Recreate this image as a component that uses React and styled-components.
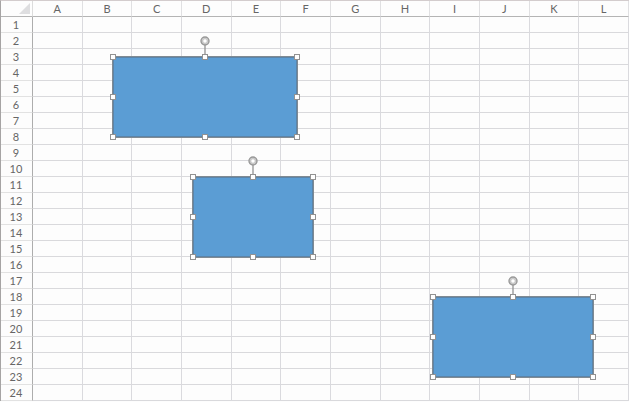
import React from "react";
import styled, { createGlobalStyle } from "styled-components";

const GlobalStyle = createGlobalStyle`
  *, *::before, *::after { box-sizing: border-box; }
  body {
    margin: 0;
    overflow: hidden;
    background: #fdfdfd;
    font-family: Lato, "Open Sans", sans-serif;
  }
`;

const Sheet = styled.main`
  position: relative;
  height: 100vh;
  overflow: hidden;
`;

const Grid = styled.table`
  width: 100%;
  table-layout: fixed;
  border-collapse: separate;
  border-spacing: 0;
  border-top: 1px solid #d3cccd;
  border-left: 1px solid #a6a4a4;
  font-size: 11px;
  line-height: 15px;
  color: #666;
`;

const Corner = styled.td`
  width: 32px;
  padding: 0;
  border-right: 1px solid #dcdcdc;
  border-bottom: 1px solid #b4b4b4;
`;

const SelectAll = styled.button`
  display: flex;
  justify-content: flex-end;
  align-items: flex-end;
  width: 100%;
  height: 15px;
  padding: 0 2px 2px 0;
  border: 0;
  background: none;
`;

const ColumnHeading = styled.th`
  height: 16px;
  padding: 1px 0 0;
  line-height: 14px;
  font-weight: 400;
  text-align: center;
  border-right: 1px solid #e0e0e2;
  border-bottom: 1px solid #b4b4b4;
`;

const RowHeading = styled.th`
  height: 16px;
  padding: 0 1px 0 0;
  font-weight: 400;
  text-align: center;
  border-right: 1px solid #adadad;
  border-bottom: 1px solid #e2e2e2;
`;

const Cell = styled.td`
  padding: 0;
  border-right: 1px solid #dadade;
  border-bottom: 1px solid #d9d9dc;
`;

const Shape = styled.div`
  position: absolute;
  left: ${(p) => p.$x}px;
  top: ${(p) => p.$y}px;
  width: ${(p) => p.$w}px;
  height: ${(p) => p.$h}px;
  background: #5b9dd4;
  border: 1px solid #808a92;
  box-shadow: inset 0 0 0 1px #5c84a8;
`;

const Handle = styled.span`
  position: absolute;
  left: ${(p) => p.$left};
  top: ${(p) => p.$top};
  width: 6px;
  height: 6px;
  transform: translate(-50%, -50%);
  background: #fff;
  border: 1px solid #929292;
`;

const Rotator = styled.svg`
  position: absolute;
  left: 50%;
  top: -22px;
  width: 11px;
  height: 22px;
  transform: translateX(-50%);
`;

const columns = "ABCDEFGHIJKL".split("");
const rows = Array.from({ length: 24 }, (_, i) => i + 1);
const spots = [
  ["0%", "0%"], ["50%", "0%"], ["100%", "0%"],
  ["0%", "50%"], ["100%", "50%"],
  ["0%", "100%"], ["50%", "100%"], ["100%", "100%"],
];
const shapes = [
  { x: 112, y: 56, w: 186, h: 82 },
  { x: 192, y: 176, w: 122, h: 82 },
  { x: 432, y: 296, w: 162, h: 82 },
];

function SelectedShape({ x, y, w, h }) {
  return (
    <Shape $x={x} $y={y} $w={w} $h={h}>
      <Rotator viewBox="0 0 11 22" aria-hidden="true">
        <path d="M5.5 10V22" stroke="#939393" strokeWidth="1.3" />
        <circle cx="5.5" cy="6" r="4" fill="#d0d0d0" stroke="#999" strokeWidth="1.4" />
        <circle cx="5.5" cy="6" r="2.2" fill="#fff" stroke="#b0b0b0" strokeWidth="0.6" />
      </Rotator>
      {spots.map(([left, top]) => (
        <Handle key={left + top} $left={left} $top={top} />
      ))}
    </Shape>
  );
}

export default function App() {
  return (
    <>
      <GlobalStyle />
      <Sheet>
        <Grid>
          <thead>
            <tr>
              <Corner>
                <SelectAll aria-label="Select all">
                  <svg width="11" height="11" viewBox="0 0 11 11" aria-hidden="true">
                    <path d="M11 0V11H0Z" fill="#dedee0" />
                  </svg>
                </SelectAll>
              </Corner>
              {columns.map((c) => (
                <ColumnHeading key={c} scope="col">{c}</ColumnHeading>
              ))}
            </tr>
          </thead>
          <tbody>
            {rows.map((r) => (
              <tr key={r}>
                <RowHeading scope="row">{r}</RowHeading>
                {columns.map((c) => <Cell key={c} />)}
              </tr>
            ))}
          </tbody>
        </Grid>
        {shapes.map((s) => <SelectedShape key={s.x} {...s} />)}
      </Sheet>
    </>
  );
}
